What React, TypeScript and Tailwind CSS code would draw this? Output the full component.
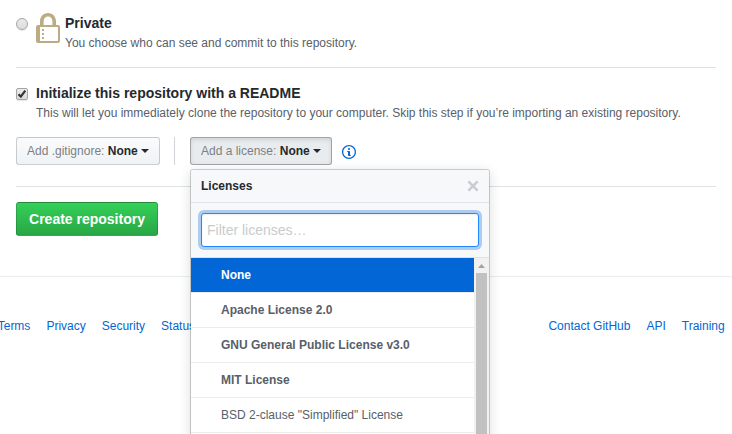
const LICENSES = [
  { name: "Apache License 2.0", featured: true },
  { name: "GNU General Public License v3.0", featured: true },
  { name: "MIT License", featured: true },
  { name: 'BSD 2-clause "Simplified" License', featured: false },
];

function LockIcon() {
  return (
    <svg width="24" height="32" viewBox="0 0 12 16" fill="#bbac83" className="block shrink-0">
      <path
        fillRule="evenodd"
        d="M4 13H3v-1h1v1zm8-6v7c0 .55-.45 1-1 1H1c-.55 0-1-.45-1-1V7c0-.55.45-1 1-1h1V4c0-2.2 1.8-4 4-4s4 1.8 4 4v2h1c.55 0 1 .45 1 1zM3.8 6h4.41V4c0-1.22-.98-2.2-2.2-2.2-1.22 0-2.2.98-2.2 2.2v2H3.8zM11 7H2v7h9V7zM4 8H3v1h1V8zm0 2H3v1h1v-1z"
      />
    </svg>
  );
}

function InfoIcon() {
  return (
    <svg width="14" height="16" viewBox="0 0 14 16" fill="#0366d6" className="ml-[10px] mt-[7px] block shrink-0">
      <path
        fillRule="evenodd"
        d="M6.3 5.69a.942.942 0 0 1-.28-.7c0-.28.09-.52.28-.7.19-.18.42-.28.7-.28.28 0 .52.09.7.28.18.19.28.42.28.7 0 .28-.09.52-.28.7a1 1 0 0 1-.7.3c-.28 0-.52-.11-.7-.3zM8 7.99c-.02-.25-.11-.48-.31-.69-.2-.19-.42-.3-.69-.31H6c-.27.02-.48.13-.69.31-.2.2-.3.44-.31.69h1v3c.02.27.11.5.31.69.2.2.42.31.69.31h1c.27 0 .48-.11.69-.31.2-.19.3-.42.31-.69H8V7.98v.01zM7 2.3c-3.14 0-5.7 2.54-5.7 5.68 0 3.14 2.56 5.7 5.7 5.7s5.7-2.55 5.7-5.7c0-3.15-2.56-5.69-5.7-5.69v.01zM7 .98c3.86 0 7 3.14 7 7s-3.14 7-7 7-7-3.12-7-7 3.14-7 7-7z"
      />
    </svg>
  );
}

function CloseIcon() {
  return (
    <svg width="12" height="16" viewBox="0 0 12 16" fill="#c6cbd1" stroke="#c6cbd1" strokeWidth="0.4" className="block">
      <path
        fillRule="evenodd"
        d="M7.48 8l3.75 3.75-1.48 1.48L6 9.48l-3.75 3.75-1.48-1.48L4.52 8 .77 4.25l1.48-1.48L6 6.52l3.75-3.75 1.48 1.48z"
      />
    </svg>
  );
}

function Caret() {
  return (
    <span className="mb-[2px] ml-[3px] inline-block border-x-4 border-t-4 border-x-transparent border-t-[#24292e] align-middle" />
  );
}

function LicenseMenu() {
  return (
    <div className="absolute left-0 top-8 z-10 h-[320px] w-[300px] overflow-hidden rounded-[3px] border border-[#1b1f23]/20 bg-white bg-clip-padding text-xs shadow-[0_3px_12px_rgba(27,31,35,0.15)]">
      <div className="flex h-[33px] items-center justify-between border-b border-[#e1e4e8] bg-[#f6f8fa] px-[10px]">
        <span className="font-bold text-[#24292e]">Licenses</span>
        <button className="block">
          <CloseIcon />
        </button>
      </div>
      <div className="h-[55px] border-b border-[#dfe2e5] bg-[#f6f8fa] p-[10px]">
        <input
          className="block h-[34px] w-full rounded-[3px] border border-[#2188ff] bg-white px-[5px] text-sm shadow-[inset_0_1px_2px_rgba(27,31,35,0.075),0_0_0_3px_rgba(3,102,214,0.3)] outline-none placeholder:text-[#c9cbcd]"
          placeholder="Filter licenses…"
        />
      </div>
      <div className="flex h-[240px]">
        <ul className="flex-1">
          <li className="flex h-[35px] items-center border-b border-[#eaecef] bg-[#0366d6] bg-clip-padding pl-[30px] font-bold text-white">
            None
          </li>
          {LICENSES.map((l) => (
            <li
              key={l.name}
              className={`flex h-[35px] items-center border-b border-[#eaecef] pl-[30px] text-[#586069] ${l.featured ? "font-bold" : ""}`}
            >
              {l.name}
            </li>
          ))}
        </ul>
        <div className="flex w-[15px] flex-col items-center bg-[#f1f1f1]">
          <div className="flex h-[15px] items-center justify-center">
            <svg width="7" height="4" viewBox="0 0 7 4" fill="#a3a3a3">
              <path d="M3.5 0L7 4H0z" />
            </svg>
          </div>
          <div className="w-[11px] flex-1 bg-[#c1c1c1]" />
        </div>
      </div>
    </div>
  );
}

export default function App() {
  return (
    <div className="h-[434px] w-[732px] overflow-hidden bg-white font-['Liberation_Sans',Arial,sans-serif] text-sm leading-[1.5] text-[#24292e]">
      <div className="mx-4">
        <div className="flex h-[68px] border-b border-[#dfe2e5] pt-[13px]">
          <span className="mt-[5px] h-3 w-3 shrink-0 rounded-full border border-[#a5a5a5] bg-linear-to-b from-[#ebebeb] to-[#dcdcdc] shadow-[0_1px_1px_rgba(0,0,0,0.1)]" />
          <div className="ml-2">
            <LockIcon />
          </div>
          <div className="ml-[5px]">
            <div className="h-[21px] text-sm leading-[21px] font-bold">Private</div>
            <p className="text-xs leading-[18px] text-[#586069]">
              You choose who can see and commit to this repository.
            </p>
          </div>
        </div>

        <div className="flex h-[69px] pt-[15px]">
          <span className="mt-[5px] flex h-3 w-3 shrink-0 items-center justify-center rounded-[2px] border border-[#a5a5a5] bg-linear-to-b from-[#ebebeb] to-[#dcdcdc] shadow-[0_1px_1px_rgba(0,0,0,0.1)]">
            <svg width="10" height="10" viewBox="0 0 10 10" className="shrink-0">
              <path d="M1.5 5.3L3.8 7.6L8.3 1.7" fill="none" stroke="#333" strokeWidth="2.2" />
            </svg>
          </span>
          <div className="ml-2">
            <div className="h-[21px] text-sm leading-[21px] font-bold">Initialize this repository with a README</div>
            <p className="text-xs leading-[18px] text-[#586069]">
              This will let you immediately clone the repository to your computer. Skip this step if you’re importing an
              existing repository.
            </p>
          </div>
        </div>

        <div className="flex h-[50px] border-b border-[#dfe2e5]">
          <button className="h-7 w-36 rounded-[3px] border border-[#1b1f23]/20 bg-linear-to-b from-[#fafbfc] to-[#eff3f6] text-left text-xs leading-[26px] whitespace-nowrap">
            <span className="pl-[10px] text-[#7c8084]">Add .gitignore:</span> <b>None</b>
            <Caret />
          </button>
          <div className="ml-[14px] h-7 w-px bg-[#d1d5da]" />
          <div className="relative ml-[15px]">
            <button className="block h-7 w-[142px] rounded-[3px] border border-[#1b1f23]/35 bg-[#e9ecef] text-left text-xs leading-[26px] whitespace-nowrap shadow-[inset_0_2px_4px_rgba(27,31,35,0.12)]">
              <span className="pl-[10px] text-[#7c8084]">Add a license:</span> <b>None</b>
              <Caret />
            </button>
            <LicenseMenu />
          </div>
          <InfoIcon />
        </div>

        <div className="h-[89px] pt-[15px]">
          <button className="block h-[34px] w-[142px] rounded-[3px] border border-[#1b1f23]/20 bg-linear-to-b from-[#34d058] to-[#28a745] text-center text-sm leading-8 font-bold text-white">
            Create repository
          </button>
        </div>
      </div>

      <footer className="flex justify-between border-t border-[#eaecef] pt-10 pr-[7.3px] text-xs leading-[18px] text-[#0366d6]">
        <nav className="-ml-[2.3px] flex gap-4">
          <a>Terms</a>
          <a>Privacy</a>
          <a>Security</a>
          <a>Status</a>
        </nav>
        <nav className="flex gap-4">
          <a>Contact GitHub</a>
          <a>API</a>
          <a>Training</a>
        </nav>
      </footer>
    </div>
  );
}
